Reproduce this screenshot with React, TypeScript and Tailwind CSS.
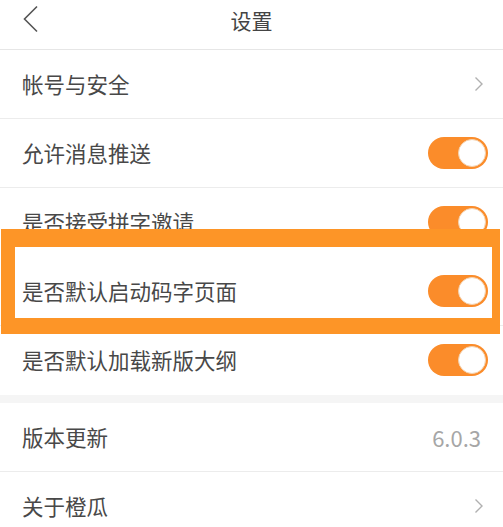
import React from "react";

const font = { fontFamily: '"Noto Sans CJK SC", "Noto Sans", sans-serif' };

function Toggle() {
  return (
    <div className="relative w-[60px] h-[32px] rounded-full bg-[#fb8c2a]">
      <div className="absolute right-[2px] top-[2px] w-[28px] h-[28px] rounded-full bg-white border border-[#f3d2b0]" />
    </div>
  );
}

function Chevron() {
  return (
    <svg width="10" height="16" viewBox="0 0 10 16" fill="none">
      <path d="M1.5 1.5 L8 8 L1.5 14.5" stroke="#b0b0b0" strokeWidth="1.4" />
    </svg>
  );
}

function Row({
  label,
  right,
  border = true,
}: {
  label: string;
  right: React.ReactNode;
  border?: boolean;
}) {
  return (
    <div
      className={`flex items-center justify-between h-[69px] pl-[22px] ${
        border ? "border-b border-[#ececec]" : "border-b border-transparent"
      }`}
    >
      <span className="text-[21.5px] text-[#484848] leading-none">{label}</span>
      {right}
    </div>
  );
}

export default function App() {
  return (
    <div className="relative w-[503px] h-[527px] overflow-hidden bg-white" style={font}>
      {/* Header */}
      <div className="relative flex items-center justify-center h-[50px] border-b border-[#e6e6e6]">
        <svg
          className="absolute left-[22px] top-[5px]"
          width="18"
          height="28"
          viewBox="0 0 18 28"
          fill="none"
        >
          <path d="M15 1.5 L2.5 14 L15 26.5" stroke="#555" strokeWidth="1.6" />
        </svg>
        <span className="text-[21px] text-[#444] -mt-[8px]">设置</span>
      </div>

      <Row label="帐号与安全" right={<div className="pr-[19px]"><Chevron /></div>} />
      <Row label="允许消息推送" right={<div className="pr-[15px]"><Toggle /></div>} />
      <Row label="是否接受拼字邀请" border={false} right={<div className="pr-[15px]"><Toggle /></div>} />
      <Row label="是否默认启动码字页面" right={<div className="pr-[15px]"><Toggle /></div>} />
      <Row label="是否默认加载新版大纲" border={false} right={<div className="pr-[15px]"><Toggle /></div>} />

      <div className="h-[8px] bg-[#f5f5f5]" />

      <Row
        label="版本更新"
        right={<span className="pr-[22px] text-[22px] text-[#a6a6a6] leading-none">6.0.3</span>}
      />
      <Row label="关于橙瓜" border={false} right={<div className="pr-[19px]"><Chevron /></div>} />

      {/* Highlight frame */}
      <div className="absolute left-[1px] top-[229px] w-[499px] h-[105px] border-[#fd9527] border-t-[18px] border-l-[14px] border-r-[8px] border-b-[16px]" />
    </div>
  );
}
